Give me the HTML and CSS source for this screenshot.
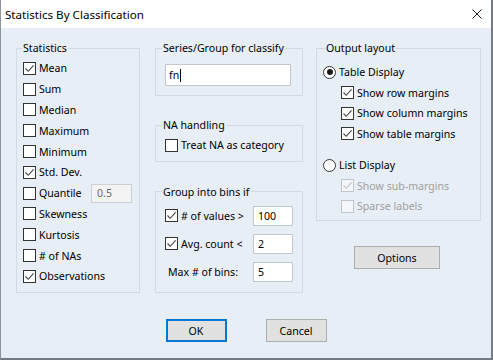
FILE: index.html
```html
<!DOCTYPE html>
<html lang="en">
<head>
    <meta charset="UTF-8">
    <meta name="viewport" content="width=device-width, initial-scale=1.0">
    <title>Statistics By Classification</title>
    <link rel="stylesheet" href="styles.css">
</head>
<body>
    <div class="window">
        <header class="titlebar">
            <span class="title">Statistics By Classification</span>
            <span class="close">
                <svg width="10" height="10" viewBox="0 0 10 10"><path d="M0.5 0.5L9.5 9.5M9.5 0.5L0.5 9.5" stroke="#1a1a1a" stroke-width="1" fill="none"/></svg>
            </span>
        </header>

        <div class="dialog">
            <div class="columns">
                <fieldset class="group stats">
                    <legend>Statistics</legend>
                    <div class="row"><span class="box"><svg width="11" height="11" viewBox="0 0 11 11"><path d="M1.5 5.5L4.2 8.3L9.6 2.4" stroke="#444" stroke-width="1.1" fill="none"/></svg></span>Mean</div>
                    <div class="row"><span class="box"></span>Sum</div>
                    <div class="row"><span class="box"></span>Median</div>
                    <div class="row"><span class="box"></span>Maximum</div>
                    <div class="row"><span class="box"></span>Minimum</div>
                    <div class="row"><span class="box"><svg width="11" height="11" viewBox="0 0 11 11"><path d="M1.5 5.5L4.2 8.3L9.6 2.4" stroke="#444" stroke-width="1.1" fill="none"/></svg></span>Std. Dev.</div>
                    <div class="row"><span class="box"></span>Quantile<span class="field quantile">0.5</span></div>
                    <div class="row"><span class="box"></span>Skewness</div>
                    <div class="row"><span class="box"></span>Kurtosis</div>
                    <div class="row"><span class="box"></span># of NAs</div>
                    <div class="row"><span class="box"><svg width="11" height="11" viewBox="0 0 11 11"><path d="M1.5 5.5L4.2 8.3L9.6 2.4" stroke="#444" stroke-width="1.1" fill="none"/></svg></span>Observations</div>
                </fieldset>

                <div class="mid">
                    <fieldset class="group series">
                        <legend>Series/Group for classify</legend>
                        <div class="text-input">fn<span class="caret"></span></div>
                    </fieldset>

                    <fieldset class="group na">
                        <legend>NA handling</legend>
                        <div class="row"><span class="box"></span>Treat NA as category</div>
                    </fieldset>

                    <fieldset class="group bins">
                        <legend>Group into bins if</legend>
                        <div class="bin-rows">
                            <div class="row"><span class="box"><svg width="11" height="11" viewBox="0 0 11 11"><path d="M1.5 5.5L4.2 8.3L9.6 2.4" stroke="#444" stroke-width="1.1" fill="none"/></svg></span># of values &gt;<span class="field bin">100</span></div>
                            <div class="row"><span class="box"><svg width="11" height="11" viewBox="0 0 11 11"><path d="M1.5 5.5L4.2 8.3L9.6 2.4" stroke="#444" stroke-width="1.1" fill="none"/></svg></span>Avg. count &lt;<span class="field bin">2</span></div>
                            <div class="row"><span class="max-label">Max # of bins:</span><span class="field bin">5</span></div>
                        </div>
                    </fieldset>
                </div>

                <div class="right">
                    <fieldset class="group output">
                        <legend>Output layout</legend>
                        <div class="row"><span class="radio on"></span>Table Display</div>
                        <div class="row sub"><span class="box"><svg width="11" height="11" viewBox="0 0 11 11"><path d="M1.5 5.5L4.2 8.3L9.6 2.4" stroke="#444" stroke-width="1.1" fill="none"/></svg></span>Show row margins</div>
                        <div class="row sub"><span class="box"><svg width="11" height="11" viewBox="0 0 11 11"><path d="M1.5 5.5L4.2 8.3L9.6 2.4" stroke="#444" stroke-width="1.1" fill="none"/></svg></span>Show column margins</div>
                        <div class="row sub"><span class="box"><svg width="11" height="11" viewBox="0 0 11 11"><path d="M1.5 5.5L4.2 8.3L9.6 2.4" stroke="#444" stroke-width="1.1" fill="none"/></svg></span>Show table margins</div>
                        <div class="row list"><span class="radio"></span>List Display</div>
                        <div class="row sub disabled"><span class="box"><svg width="11" height="11" viewBox="0 0 11 11"><path d="M1.5 5.5L4.2 8.3L9.6 2.4" stroke="#c4c4c4" stroke-width="1.1" fill="none"/></svg></span>Show sub-margins</div>
                        <div class="row sub disabled"><span class="box"></span>Sparse labels</div>
                    </fieldset>
                    <button class="btn options">Options</button>
                </div>
            </div>

            <div class="footer">
                <button class="btn default">OK</button>
                <button class="btn">Cancel</button>
            </div>
        </div>
    </div>
</body>
</html>
```

FILE: styles.css
```css
* {
    box-sizing: border-box;
}

body {
    margin: 0;
    font-family: "Noto Sans", sans-serif;
    font-size: 10.6px;
    color: #000;
    background-color: #e8eef6;
}

.window {
    width: 493px;
    height: 360px;
    background-color: #e8eef6;
    border-left: 1px solid #8d949c;
    border-right: 2px solid #737b84;
    border-bottom: 2px solid #737b84;
    display: flex;
    flex-direction: column;
}

.titlebar {
    height: 28px;
    flex-shrink: 0;
    background-color: #fff;
    display: flex;
    align-items: center;
    justify-content: space-between;
    padding: 0 9px 0 4px;
}

.title {
    font-size: 11.6px;
}

.close {
    display: flex;
    width: 10px;
    height: 10px;
}

.dialog {
    padding-top: 12px;
}

.columns {
    display: flex;
    align-items: flex-start;
    padding-left: 15px;
}

.group {
    margin: 0;
    padding: 0;
    min-width: 0;
    border: 1px solid #d3dae3;
}

.group legend {
    padding: 0 1px;
    height: 16px;
    line-height: 16px;
}

.row {
    display: flex;
    align-items: center;
    height: 20.8px;
    white-space: nowrap;
}

.box {
    display: flex;
    flex-shrink: 0;
    width: 13px;
    height: 13px;
    margin-right: 3px;
    border: 1px solid #333;
    background-color: #fff;
}

.radio {
    display: flex;
    align-items: center;
    justify-content: center;
    flex-shrink: 0;
    width: 13px;
    height: 13px;
    margin-right: 3px;
    border: 1px solid #333;
    border-radius: 50%;
    background-color: #fff;
}

.radio.on::after {
    content: "";
    width: 6px;
    height: 6px;
    border-radius: 50%;
    background-color: #1a1a1a;
}

.field {
    display: flex;
    align-items: center;
    margin-left: auto;
    padding-left: 4px;
    border: 1px solid #c3c9d0;
    background-color: #fff;
}

/* Statistics */
.stats {
    width: 124px;
    height: 253px;
    padding: 2px 7px 0 6px;
}

.stats legend {
    margin-left: -1px;
}

.quantile {
    width: 41px;
    height: 19px;
    padding-left: 5px;
    color: #6d6d6d;
    background-color: #f3f3f3;
    border-color: #cdd1d6;
}

/* Middle column */
.mid {
    width: 148px;
    margin-left: 15px;
    display: flex;
    flex-direction: column;
}

.mid legend {
    margin-left: -3px;
}

.series {
    height: 56px;
    padding: 8px 9px 0 9px;
}

.text-input {
    display: flex;
    align-items: center;
    width: 126px;
    height: 22px;
    padding-left: 3px;
    border: 1px solid #c3c9d0;
    background-color: #fff;
}

.caret {
    width: 1px;
    height: 13px;
    margin-left: 1px;
    background-color: #000;
}

.na {
    margin-top: 21px;
    padding: 2px 9px 5px 9px;
}

.bins {
    margin-top: 22px;
    padding: 6px 9px 10px 9px;
}

.bin-rows {
    display: flex;
    flex-direction: column;
    gap: 8px;
}

.bin-rows .row {
    height: 20px;
}

.bin {
    width: 40px;
    height: 20px;
}

.max-label {
    padding-left: 3px;
}

/* Right column */
.right {
    width: 165px;
    margin-left: 13px;
    display: flex;
    flex-direction: column;
}

.output {
    padding: 5.75px 6px 4px 6px;
}

.output legend {
    margin-left: 2px;
}

.output .row {
    height: 20.5px;
}

.output .sub {
    margin-left: 18px;
}

.output .list {
    margin-top: 11px;
}

.disabled {
    color: #a0a0a0;
}

.disabled .box {
    border-color: #c2c6cb;
    background-color: #f3f6fa;
}

/* Buttons */
.btn {
    font-family: "Noto Sans", sans-serif;
    font-size: 10.6px;
    color: #000;
    height: 23px;
    padding: 0;
    border: 1px solid #adadad;
    background-color: #e1e1e1;
}

.options {
    width: 86px;
    margin: 25px 0 0 38px;
}

.footer {
    display: flex;
    justify-content: center;
    gap: 39px;
    margin-top: 26px;
}

.footer .btn {
    width: 61px;
}

.btn.default {
    border-color: #0078d7;
    box-shadow: inset 0 0 0 1px #0078d7;
}
```
